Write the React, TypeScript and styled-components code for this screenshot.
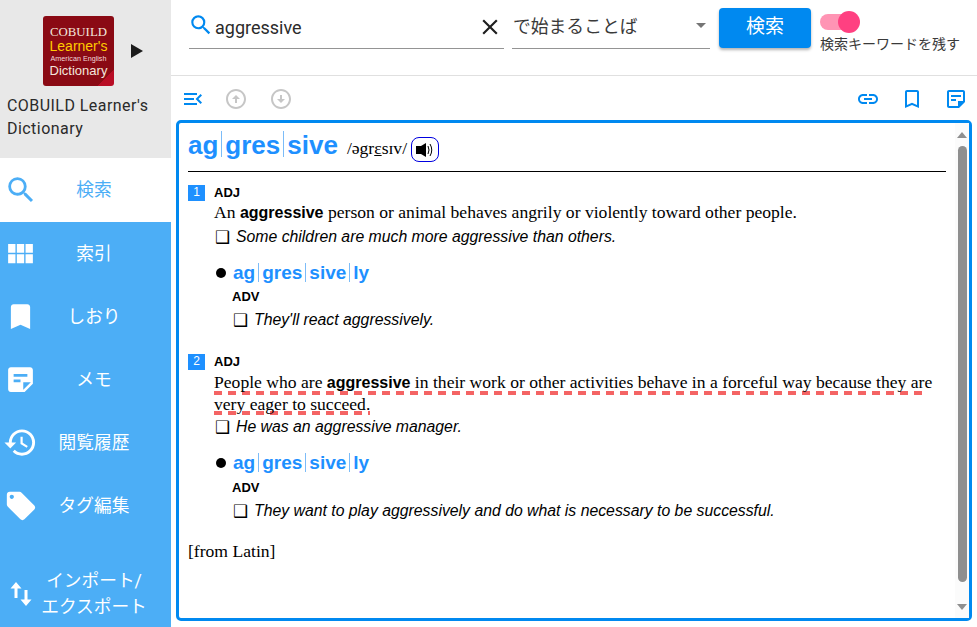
import styled, { createGlobalStyle } from 'styled-components';
import {
  MdSearch,
  MdViewModule,
  MdBookmark,
  MdBookmarkBorder,
  MdStickyNote2,
  MdOutlineStickyNote2,
  MdHistory,
  MdLocalOffer,
  MdClose,
  MdLink,
  MdMenuOpen,
  MdOutlineArrowCircleUp,
  MdOutlineArrowCircleDown,
} from 'react-icons/md';
import type { ReactNode } from 'react';

const BLUE = '#0089f0';
const SIDE_BLUE = '#4caef6';
const WORD_BLUE = '#1e90ff';
const SANS = `Roboto, 'Noto Sans CJK JP', sans-serif`;
const ARIAL = `'Liberation Sans', Arial, sans-serif`;
const TIMES = `'Liberation Serif', 'Times New Roman', serif`;

const GlobalStyle = createGlobalStyle`
  html, body {
    margin: 0;
    padding: 0;
    height: 100%;
    overflow: hidden;
    background: #fff;
  }
  #root {
    height: 100%;
  }
`;

const Page = styled.div`
  display: flex;
  width: 977px;
  height: 627px;
  font-family: ${SANS};
`;

const Sidebar = styled.aside`
  width: 171px;
  flex-shrink: 0;
  display: flex;
  flex-direction: column;
  background: ${SIDE_BLUE};
`;

const DictPanel = styled.div`
  height: 158px;
  box-sizing: border-box;
  background: #e8e8e8;
  padding: 16px 0 0 7px;
`;

const LogoRow = styled.div`
  display: flex;
  align-items: center;
  margin-left: 36px;
  gap: 17px;
`;

const Logo = styled.div`
  width: 71px;
  height: 70px;
  border-radius: 3px;
  box-sizing: border-box;
  padding-top: 10px;
  background:
    linear-gradient(135deg, transparent 88%, #b80d25 88%),
    linear-gradient(225deg, transparent 92%, #8a0a14 92%),
    #8a0a14;
  display: flex;
  flex-direction: column;
  align-items: center;
  overflow: hidden;
`;

const LogoLine = styled.div<{ $font: string; $size: number; $color: string; $height: number }>`
  font-family: ${p => p.$font};
  font-size: ${p => p.$size}px;
  line-height: ${p => p.$height}px;
  color: ${p => p.$color};
  white-space: nowrap;
`;

const PlayArrow = styled.div`
  width: 0;
  height: 0;
  border-style: solid;
  border-width: 7px 0 7px 12px;
  border-color: transparent transparent transparent #1c1c1c;
`;

const DictName = styled.div`
  margin-top: 8px;
  font-size: 16px;
  line-height: 23px;
  color: #2a2a2a;
  letter-spacing: 0.45px;
`;

const NavItem = styled.div<{ $active?: boolean; $height?: number }>`
  display: flex;
  align-items: center;
  flex-shrink: 0;
  box-sizing: border-box;
  height: ${p => p.$height ?? 63}px;
  padding: 0 0 ${p => (p.$active ? 1 : 0)}px 3px;
  background: ${p => (p.$active ? '#fff' : 'transparent')};
  color: ${p => (p.$active ? SIDE_BLUE : '#fff')};
`;

const NavIcon = styled.div`
  width: 35px;
  display: flex;
  align-items: center;
  justify-content: center;
  flex-shrink: 0;
`;

const NavLabel = styled.div`
  width: 112px;
  text-align: center;
  font-size: 17.7px;
  line-height: 26px;
  white-space: nowrap;
`;

const NavBottom = styled.div`
  margin-top: auto;
  padding-top: 1px;
`;

const Main = styled.main`
  flex: 1;
  min-width: 0;
  display: flex;
  flex-direction: column;
`;

const SearchBar = styled.div`
  height: 76px;
  box-sizing: border-box;
  border-bottom: 1px solid #e0e0e0;
  display: flex;
  padding: 8px 0 0 18px;
`;

const InputField = styled.div`
  width: 315px;
  height: 41px;
  box-sizing: border-box;
  border-bottom: 1px solid #949494;
  display: flex;
  align-items: center;
  font-size: 18px;
  color: #2b2b2b;
  padding-bottom: 2px;
`;

const SearchIcon = styled(MdSearch)`
  color: ${BLUE};
  margin: -4px 1px 0 -1px;
`;

const InputText = styled.div`
  flex: 1;
`;

const ClearIcon = styled(MdClose)`
  color: #1f1f1f;
  margin-right: 1px;
`;

const SelectField = styled.div`
  width: 198px;
  height: 41px;
  margin-left: 8px;
  box-sizing: border-box;
  border-bottom: 1px solid #949494;
  display: flex;
  align-items: center;
  justify-content: space-between;
  font-size: 17.8px;
  color: #3a3a3a;
  padding: 0 4px 6px 1px;
`;

const SelectArrow = styled.div`
  width: 0;
  height: 0;
  border-style: solid;
  border-width: 5px 5px 0 5px;
  border-color: #757575 transparent transparent transparent;
`;

const SearchButton = styled.button`
  width: 92px;
  height: 40px;
  margin-left: 9px;
  border: none;
  border-radius: 4px;
  background: ${BLUE};
  color: #fff;
  font-family: ${SANS};
  font-size: 19px;
  line-height: 24px;
  padding: 0 0 2px;
  box-shadow: 0 2px 3px rgba(0, 0, 0, 0.3);
`;

const KeepKeyword = styled.div`
  margin-left: 9px;
  display: flex;
  flex-direction: column;
  margin-top: 3px;
`;

const SwitchTrack = styled.div`
  position: relative;
  width: 35px;
  height: 16px;
  margin-top: 3px;
  border-radius: 8px;
  background: #ff94b4;
`;

const SwitchThumb = styled.div`
  position: absolute;
  left: 18px;
  top: -3px;
  width: 22px;
  height: 22px;
  border-radius: 50%;
  background: #ff4081;
`;

const KeepLabel = styled.div`
  margin-top: 5px;
  font-size: 14px;
  line-height: 18px;
  color: #3a3a3a;
  white-space: nowrap;
`;

const Toolbar = styled.div`
  height: 44px;
  flex-shrink: 0;
  display: flex;
  align-items: center;
  padding: 2px 9px 0 10px;
  box-sizing: border-box;
  color: ${BLUE};
`;

const ToolIcon = styled.div<{ $muted?: boolean; $gap?: number }>`
  display: flex;
  margin-left: ${p => p.$gap ?? 0}px;
  color: ${p => (p.$muted ? '#c6c6c6' : BLUE)};
`;

const ToolSpacer = styled.div`
  flex: 1;
`;

const EntryBox = styled.section`
  height: 501px;
  margin: 0 5px 0 5px;
  box-sizing: border-box;
  border: 3px solid ${BLUE};
  border-radius: 5px;
  display: flex;
`;

const EntryBody = styled.div`
  flex: 1;
  min-width: 0;
  padding: 6px 9px 0 9px;
  color: #000;
  font-family: ${TIMES};
  font-size: 17.6px;
  line-height: 22px;
`;

const HeadLine = styled.div`
  display: flex;
  align-items: flex-start;
  height: 42px;
  border-bottom: 1px solid #000;
`;

const HeadWord = styled.span`
  font-family: ${ARIAL};
  font-weight: 700;
  font-size: 26px;
  line-height: 32px;
  color: ${WORD_BLUE};
`;

const SylBar = styled.span<{ $height: number }>`
  display: inline-block;
  width: 1px;
  height: ${p => p.$height}px;
  margin: 0 3px;
  vertical-align: -3px;
  background: #7cbcf8;
`;

const Pron = styled.span`
  margin-left: 9px;
  line-height: 38px;
`;

const Stress = styled.span`
  text-decoration: underline;
`;

const AudioButton = styled.div`
  margin: 8px 0 0 4px;
  width: 28px;
  height: 25px;
  box-sizing: border-box;
  border: 1px solid #0000e0;
  border-radius: 8px;
  display: flex;
  align-items: center;
  justify-content: center;
`;

const SenseHead = styled.div`
  display: flex;
  align-items: center;
  height: 17px;
`;

const SenseNum = styled.div`
  width: 17px;
  height: 16px;
  background: ${WORD_BLUE};
  color: #fff;
  font-family: ${ARIAL};
  font-size: 12px;
  line-height: 15px;
  text-align: center;
`;

const Pos = styled.div`
  font-family: ${ARIAL};
  font-weight: 700;
  font-size: 13px;
  line-height: 17px;
`;

const SensePos = styled(Pos)`
  margin-left: 9px;
`;

const Sense = styled.div<{ $top: number }>`
  margin-top: ${p => p.$top}px;
`;

const SenseBody = styled.div`
  padding-left: 26px;
`;

const Definition = styled.div<{ $top: number }>`
  margin-top: ${p => p.$top}px;
`;

const KeyWord = styled.b`
  font-family: ${ARIAL};
  font-size: 16px;
  line-height: 0;
`;

const Marked = styled.span<{ $drop: number }>`
  padding-bottom: ${p => p.$drop}px;
  background-image: repeating-linear-gradient(90deg, #f46464 0 8px, transparent 8px 14px);
  background-size: 100% 4px;
  background-position: left bottom;
  background-repeat: no-repeat;
`;

const Example = styled.div<{ $top: number }>`
  margin-top: ${p => p.$top}px;
  display: flex;
  align-items: center;
  height: 23px;
`;

const ExampleBox = styled.span`
  font-family: 'DejaVu Sans', sans-serif;
  font-size: 17px;
  margin-left: 1px;
  width: 21px;
  flex-shrink: 0;
`;

const ExampleText = styled.span`
  font-family: ${ARIAL};
  font-style: italic;
  font-size: 15.8px;
  white-space: nowrap;
`;

const Derived = styled.div<{ $top: number }>`
  margin-top: ${p => p.$top}px;
`;

const DerivedHead = styled.div`
  display: flex;
  align-items: center;
  height: 26px;
  padding-left: 2px;
`;

const Dot = styled.div`
  width: 10px;
  height: 10px;
  border-radius: 50%;
  background: #000;
  margin-right: 7px;
`;

const DerivedWord = styled.span`
  font-family: ${ARIAL};
  font-weight: 700;
  font-size: 19px;
  color: ${WORD_BLUE};
`;

const DerivedBody = styled.div<{ $top: number }>`
  padding-left: 18px;
  margin-top: ${p => p.$top}px;
`;

const Origin = styled.div`
  margin-top: 18px;
`;

const Scrollbar = styled.div`
  width: 14px;
  flex-shrink: 0;
  background: #fbfbfb;
  display: flex;
  flex-direction: column;
  align-items: center;
`;

const ScrollArrow = styled.div<{ $up?: boolean }>`
  width: 0;
  height: 0;
  border-style: solid;
  border-width: ${p => (p.$up ? '0 5px 6px 5px' : '6px 5px 0 5px')};
  border-color: ${p =>
    p.$up ? 'transparent transparent #8f8f8f transparent' : '#8f8f8f transparent transparent transparent'};
  margin-top: ${p => (p.$up ? '9px' : '22px')};
`;

const ScrollThumb = styled.div`
  width: 9px;
  height: 436px;
  margin-top: 8px;
  border-radius: 5px;
  background: #8f8f8f;
`;

const NAV: { label: string; icon: ReactNode; active?: boolean; height?: number }[] = [
  { label: '検索', icon: <MdSearch size={34} />, active: true, height: 64 },
  { label: '索引', icon: <MdViewModule size={33} /> },
  { label: 'しおり', icon: <MdBookmark size={33} /> },
  { label: 'メモ', icon: <MdStickyNote2 size={33} /> },
  { label: '閲覧履歴', icon: <MdHistory size={35} /> },
  { label: 'タグ編集', icon: <MdLocalOffer size={34} /> },
];

// syllable bars are a thin rule between the bold parts of a headword
const Syllables = ({ parts, barHeight }: { parts: string[]; barHeight: number }) => (
  <>
    {parts.map((part, i) => (
      <span key={part}>
        {i > 0 && <SylBar $height={barHeight} />}
        {part}
      </span>
    ))}
  </>
);

const SpeakerIcon = () => (
  <svg width="22" height="18" viewBox="0 0 22 18" fill="none">
    <rect x="2" y="5" width="6" height="8" fill="#000" />
    <path d="M7 5 L12 2 V16 L7 13 Z" fill="#000" />
    <path d="M14 5 Q16 9 14 13" stroke="#000" strokeWidth="1" />
    <path d="M16 3 Q19.5 9 16 15" stroke="#000" strokeWidth="1" />
  </svg>
);

const SwapIcon = () => (
  <svg width="24" height="30" viewBox="0 0 24 30" fill="#fff">
    <path d="M7 3 L1.5 9.5 H5.5 V19 H8.5 V9.5 H12.5 Z" />
    <path d="M17 27 L22.5 20.5 H18.5 V11 H15.5 V20.5 H11.5 Z" />
  </svg>
);

const ExampleLine = ({ children, top }: { children: string; top: number }) => (
  <Example $top={top}>
    <ExampleBox>❑</ExampleBox>
    <ExampleText>{children}</ExampleText>
  </Example>
);

const DerivedEntry = ({
  example,
  top,
  advTop,
  exampleTop,
}: {
  example: string;
  top: number;
  advTop: number;
  exampleTop: number;
}) => (
  <Derived $top={top}>
    <DerivedHead>
      <Dot />
      <DerivedWord>
        <Syllables parts={['ag', 'gres', 'sive', 'ly']} barHeight={19} />
      </DerivedWord>
    </DerivedHead>
    <DerivedBody $top={advTop}>
      <Pos>ADV</Pos>
      <ExampleLine top={exampleTop}>{example}</ExampleLine>
    </DerivedBody>
  </Derived>
);

const App = () => {
  return (
    <Page>
      <GlobalStyle />
      <Sidebar>
        <DictPanel>
          <LogoRow>
            <Logo>
              <LogoLine $font={TIMES} $size={12.8} $color="#f3e6dc" $height={13}>COBUILD</LogoLine>
              <LogoLine $font={ARIAL} $size={14} $color="#ffcc00" $height={15}>Learner's</LogoLine>
              <LogoLine $font={ARIAL} $size={7.2} $color="#f3d9d9" $height={10}>American English</LogoLine>
              <LogoLine $font={ARIAL} $size={13} $color="#f3e6dc" $height={14}>Dictionary</LogoLine>
            </Logo>
            <PlayArrow />
          </LogoRow>
          <DictName>
            COBUILD Learner's
            <br />
            Dictionary
          </DictName>
        </DictPanel>
        {NAV.map(item => (
          <NavItem key={item.label} $active={item.active} $height={item.height}>
            <NavIcon>{item.icon}</NavIcon>
            <NavLabel>{item.label}</NavLabel>
          </NavItem>
        ))}
        <NavBottom>
          <NavItem $height={66}>
            <NavIcon>
              <SwapIcon />
            </NavIcon>
            <NavLabel>
              インポート/
              <br />
              エクスポート
            </NavLabel>
          </NavItem>
        </NavBottom>
      </Sidebar>

      <Main>
        <SearchBar>
          <InputField>
            <SearchIcon size={26} />
            <InputText>aggressive</InputText>
            <ClearIcon size={26} />
          </InputField>
          <SelectField>
            で始まることば
            <SelectArrow />
          </SelectField>
          <SearchButton>検索</SearchButton>
          <KeepKeyword>
            <SwitchTrack>
              <SwitchThumb />
            </SwitchTrack>
            <KeepLabel>検索キーワードを残す</KeepLabel>
          </KeepKeyword>
        </SearchBar>

        <Toolbar>
          <ToolIcon>
            <MdMenuOpen size={24} />
          </ToolIcon>
          <ToolIcon $muted $gap={19}>
            <MdOutlineArrowCircleUp size={24} />
          </ToolIcon>
          <ToolIcon $muted $gap={21}>
            <MdOutlineArrowCircleDown size={24} />
          </ToolIcon>
          <ToolSpacer />
          <ToolIcon>
            <MdLink size={24} />
          </ToolIcon>
          <ToolIcon $gap={20}>
            <MdBookmarkBorder size={24} />
          </ToolIcon>
          <ToolIcon $gap={20}>
            <MdOutlineStickyNote2 size={24} />
          </ToolIcon>
        </Toolbar>

        <EntryBox>
          <EntryBody>
            <HeadLine>
              <HeadWord>
                <Syllables parts={['ag', 'gres', 'sive']} barHeight={26} />
              </HeadWord>
              <Pron>
                /əgr<Stress>ɛ</Stress>sɪv/
              </Pron>
              <AudioButton>
                <SpeakerIcon />
              </AudioButton>
            </HeadLine>

            <Sense $top={12}>
              <SenseHead>
                <SenseNum>1</SenseNum>
                <SensePos>ADJ</SensePos>
              </SenseHead>
              <SenseBody>
                <Definition $top={0}>
                  An <KeyWord>aggressive</KeyWord> person or animal behaves angrily or violently toward other people.
                </Definition>
                <ExampleLine top={2}>Some children are much more aggressive than others.</ExampleLine>
                <DerivedEntry example="They'll react aggressively." top={12} advTop={2} exampleTop={3} />
              </SenseBody>
            </Sense>

            <Sense $top={22}>
              <SenseHead>
                <SenseNum>2</SenseNum>
                <SensePos>ADJ</SensePos>
              </SenseHead>
              <SenseBody>
                <Definition $top={1}>
                  <Marked $drop={3}>
                    People who are <KeyWord>aggressive</KeyWord> in their work or other activities behave in a forceful way because they ar
                  </Marked>
                  e <Marked $drop={1}>very eager to succeed.</Marked>
                </Definition>
                <ExampleLine top={0}>He was an aggressive manager.</ExampleLine>
                <DerivedEntry example="They want to play aggressively and do what is necessary to be successful." top={12} advTop={3} exampleTop={3} />
              </SenseBody>
            </Sense>

            <Origin>[from Latin]</Origin>
          </EntryBody>
          <Scrollbar>
            <ScrollArrow $up />
            <ScrollThumb />
            <ScrollArrow />
          </Scrollbar>
        </EntryBox>
      </Main>
    </Page>
  );
};

export default App;
